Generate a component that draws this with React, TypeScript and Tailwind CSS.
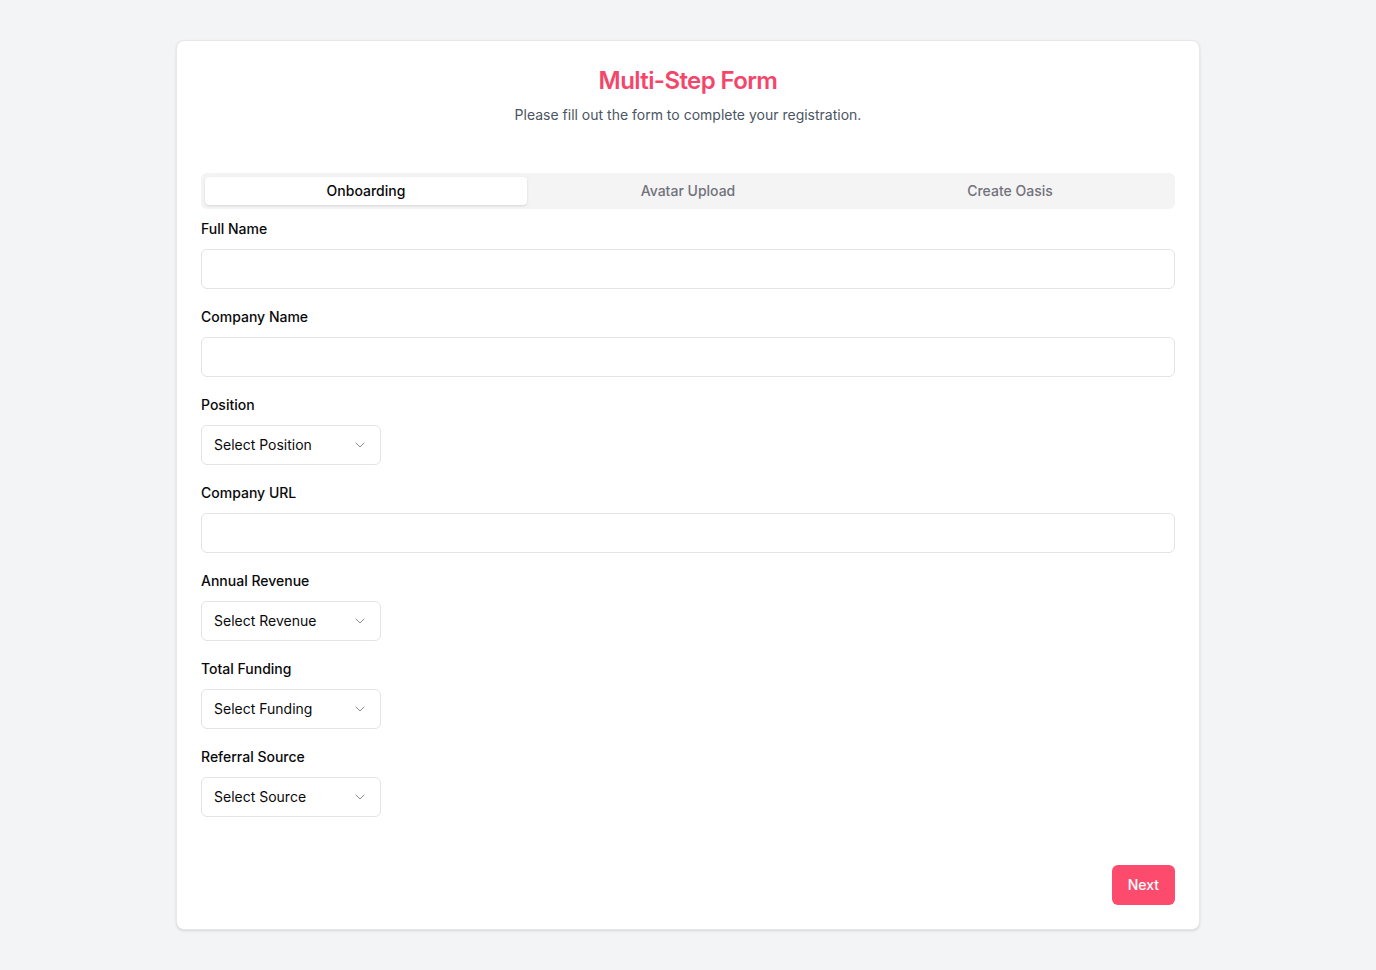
import { useState } from "react";
import { ChevronDown } from "lucide-react";
import clsx from "clsx";

const tabs = ["Onboarding", "Avatar Upload", "Create Oasis"];

const TextField = ({ label }: { label: string }) => (
  <div className="flex flex-col gap-2">
    <label className="h-6 flex items-center text-sm font-medium text-[#09090b]">
      {label}
    </label>
    <input
      type="text"
      className="h-10 w-full rounded-md border border-[#e4e4e7] bg-white px-3 text-sm outline-none"
    />
  </div>
);

const SelectField = ({
  label,
  placeholder,
}: {
  label: string;
  placeholder: string;
}) => (
  <div className="flex flex-col gap-2">
    <label className="h-6 flex items-center text-sm font-medium text-[#09090b]">
      {label}
    </label>
    <button
      type="button"
      className="h-10 w-[180px] flex items-center justify-between rounded-md border border-[#e4e4e7] bg-white px-3 text-sm text-[#09090b]"
    >
      <span>{placeholder}</span>
      <ChevronDown className="h-4 w-4 text-[#71717a] opacity-80" strokeWidth={1.5} />
    </button>
  </div>
);

export default function App() {
  const [active, setActive] = useState(0);

  return (
    <div className="min-h-screen bg-[#f3f4f6] py-10 font-['Inter',sans-serif]">
      <div className="mx-auto max-w-5xl rounded-lg border border-[#e5e7eb] bg-white p-6 shadow-sm">
        <div className="flex flex-col items-center">
          <h1 className="text-2xl font-semibold tracking-tight text-[#f4466b]">
            Multi-Step Form
          </h1>
          <p className="mt-2 text-sm text-[#4b5563]">
            Please fill out the form to complete your registration.
          </p>
        </div>

        <div className="mt-12 grid grid-cols-3 rounded-md bg-[#f4f4f5] p-1 h-9">
          {tabs.map((t, i) => (
            <button
              key={t}
              type="button"
              onClick={() => setActive(i)}
              className={clsx(
                "rounded-sm text-sm font-medium",
                active === i
                  ? "bg-white text-[#09090b] shadow-sm"
                  : "text-[#71717a]"
              )}
            >
              {t}
            </button>
          ))}
        </div>

        <div className="mt-2 flex flex-col gap-4">
          <TextField label="Full Name" />
          <TextField label="Company Name" />
          <SelectField label="Position" placeholder="Select Position" />
          <TextField label="Company URL" />
          <SelectField label="Annual Revenue" placeholder="Select Revenue" />
          <SelectField label="Total Funding" placeholder="Select Funding" />
          <SelectField label="Referral Source" placeholder="Select Source" />
        </div>

        <div className="mt-12 flex justify-end">
          <button
            type="button"
            className="h-10 rounded-md bg-[#fd4b6d] px-4 text-sm font-medium text-white"
          >
            Next
          </button>
        </div>
      </div>
    </div>
  );
}
